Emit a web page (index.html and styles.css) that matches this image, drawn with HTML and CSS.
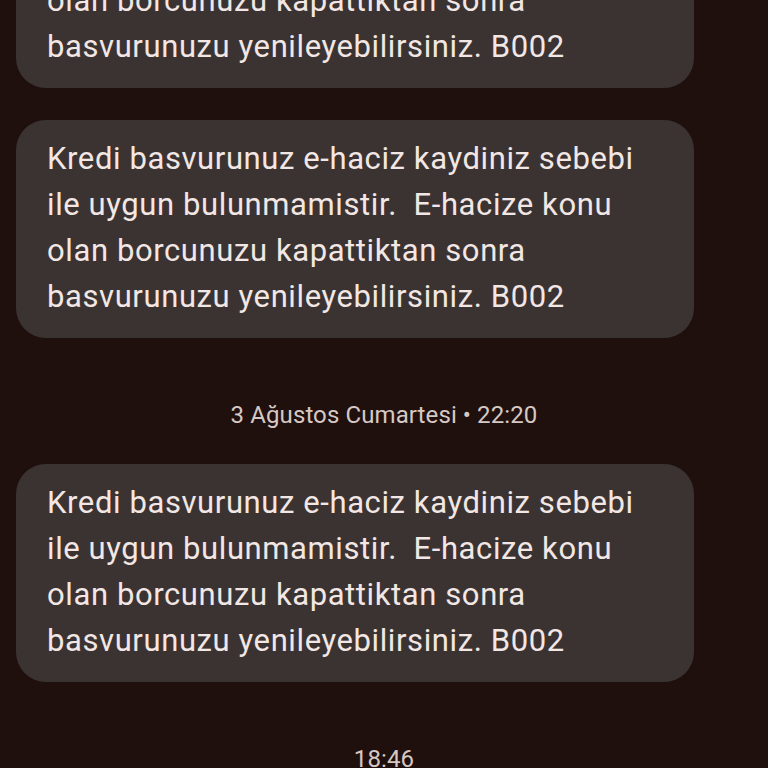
FILE: index.html
```html
<!DOCTYPE html>
<html lang="tr">
<head>
    <meta charset="UTF-8">
    <meta name="viewport" content="width=device-width, initial-scale=1.0">
    <title>Mesajlar</title>
    <link rel="stylesheet" href="styles.css">
</head>
<body>
    <div class="thread">
        <div class="bubble">Kredi basvurunuz e-haciz kaydiniz sebebi ile uygun bulunmamistir.&nbsp; E-hacize konu olan borcunuzu kapattiktan sonra basvurunuzu yenileyebilirsiniz. B002</div>

        <div class="bubble">Kredi basvurunuz e-haciz kaydiniz sebebi ile uygun bulunmamistir.&nbsp; E-hacize konu olan borcunuzu kapattiktan sonra basvurunuzu yenileyebilirsiniz. B002</div>

        <div class="stamp">3 Ağustos Cumartesi • 22:20</div>

        <div class="bubble">Kredi basvurunuz e-haciz kaydiniz sebebi ile uygun bulunmamistir.&nbsp; E-hacize konu olan borcunuzu kapattiktan sonra basvurunuzu yenileyebilirsiniz. B002</div>

        <div class="stamp">18:46</div>
    </div>
</body>
</html>
```

FILE: styles.css
```css
* {
    margin: 0;
    padding: 0;
    box-sizing: border-box;
}

html, body {
    height: 100%;
    overflow: hidden;
}

body {
    font-family: Roboto, 'Noto Sans', sans-serif;
    background: #1f100e;
    color: #f2e7e4;
}

/* list is scrolled, first bubble is cut at the top */
.thread {
    display: flex;
    flex-direction: column;
    gap: 32px;
    padding: 0 16px;
    margin-top: -130px;
}

.bubble {
    margin-right: 58px;
    background: #3b3332;
    border-radius: 30px;
    padding: 16px 42px 18px 31px;
    font-size: 31px;
    line-height: 46px;
    letter-spacing: 0.6px;
}

.stamp {
    text-align: center;
    font-size: 24px;
    line-height: 30px;
    letter-spacing: 0.1px;
    color: #d6c8c3;
    margin: 30px 0 2px;
}
```
